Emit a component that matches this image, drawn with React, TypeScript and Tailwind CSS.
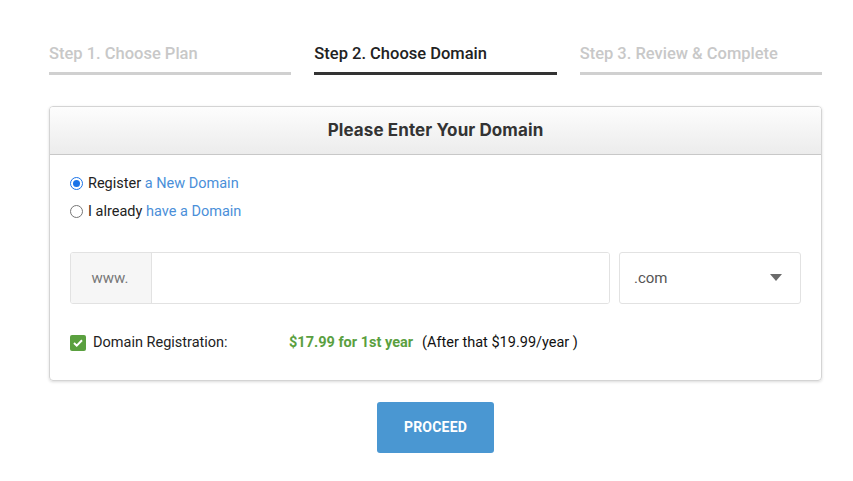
import React from "react";

export default function App() {
  return (
    <div className="w-[853px] h-[481px] bg-white font-['Roboto',sans-serif] text-[#222]">
      <div className="pl-[49px] pr-[31px] pt-[42px]">
        <div className="grid grid-cols-3 gap-x-[23px]">
          <div className="border-b-[3px] border-[#d0d0d0] pb-[5px]">
            <span className="text-[16.5px] font-medium text-[#c8c8c8]">Step 1. Choose Plan</span>
          </div>
          <div className="border-b-[3px] border-[#333] pb-[5px]">
            <span className="text-[16.5px] font-medium text-[#222]">Step 2. Choose Domain</span>
          </div>
          <div className="border-b-[3px] border-[#d0d0d0] pb-[5px]">
            <span className="text-[16.5px] font-medium text-[#c8c8c8]">Step 3. Review &amp; Complete</span>
          </div>
        </div>

        <div className="mt-[31px] border border-[#d4d4d4] rounded-[4px] shadow-[0_1px_3px_rgba(0,0,0,0.15)] overflow-hidden">
          <div className="h-[48px] flex items-center justify-center bg-gradient-to-b from-[#fdfdfd] to-[#ececec] border-b border-[#c8c8c8]">
            <span className="font-['Inter',sans-serif] font-bold text-[17px] text-[#333] tracking-[0.1px]">Please Enter Your Domain</span>
          </div>
          <div className="px-[20px] pt-[20px] pb-[26px]">
            <label className="flex items-center gap-[5px] h-[18px] text-[14.5px]">
              <span className="w-[13px] h-[13px] rounded-full border-[1.5px] border-[#1a73e8] flex items-center justify-center">
                <span className="w-[7px] h-[7px] rounded-full bg-[#1a73e8]" />
              </span>
              <span>Register <span className="text-[#4a8fd9]">a New Domain</span></span>
            </label>
            <label className="mt-[10px] flex items-center gap-[5px] h-[18px] text-[14.5px]">
              <span className="w-[13px] h-[13px] rounded-full border border-[#767676] bg-white" />
              <span>I already <span className="text-[#4a8fd9]">have a Domain</span></span>
            </label>

            <div className="mt-[31px] flex gap-[9px]">
              <div className="flex flex-1 h-[52px] border border-[#e2e2e2] rounded-[3px] overflow-hidden">
                <div className="w-[81px] bg-[#f6f6f6] border-r border-[#e2e2e2] flex items-center justify-center pr-[2px] text-[15px] text-[#777]">www.</div>
                <div className="flex-1 bg-white" />
              </div>
              <div className="w-[182px] h-[52px] border border-[#e2e2e2] rounded-[3px] flex items-center justify-between pl-[14px] pr-[18px]">
                <span className="text-[15px] text-[#555]">.com</span>
                <svg width="12" height="7" viewBox="0 0 12 7"><path d="M0 0h12L6 7z" fill="#6b6b6b" /></svg>
              </div>
            </div>

            <div className="mt-[28px] flex items-center text-[14.5px]">
              <span className="w-[16px] h-[16px] rounded-[2px] bg-[#5aa03f] flex items-center justify-center">
                <svg width="10" height="8" viewBox="0 0 10 8"><path d="M1 4l2.7 2.6L9 1.2" stroke="#fff" strokeWidth="2" fill="none" /></svg>
              </span>
              <span className="ml-[7px] w-[196px] text-[#222]">Domain Registration:</span>
              <span className="font-bold text-[#5aa03f]">$17.99 for 1st year</span>
              <span className="ml-[9px] text-[#111]">(After that $19.99/year )</span>
            </div>
          </div>
        </div>

        <div className="mt-[21px] flex justify-center">
          <button className="w-[117px] h-[51px] bg-[#4a97d2] rounded-[3px] text-white font-bold text-[14px] tracking-[0.2px]">PROCEED</button>
        </div>
      </div>
    </div>
  );
}
